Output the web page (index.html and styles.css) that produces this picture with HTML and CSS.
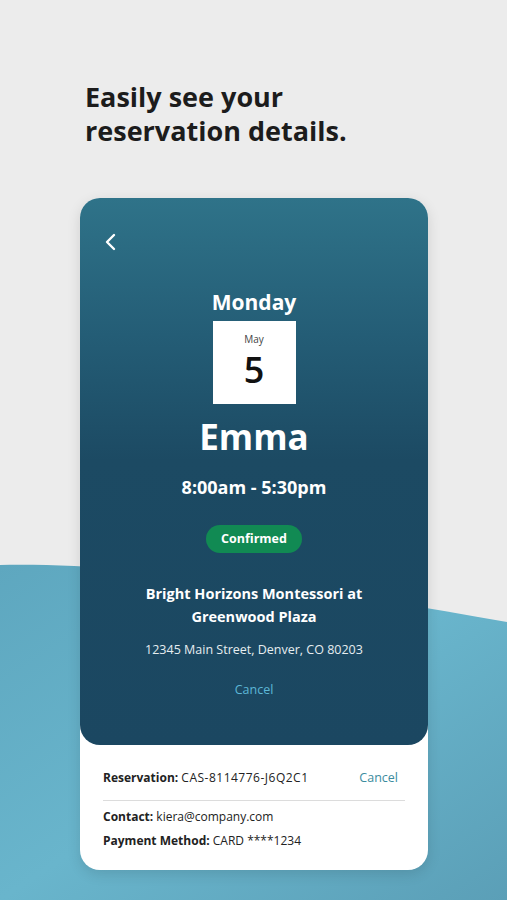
FILE: index.html
```html
<!DOCTYPE html>
<html lang="en">
<head>
    <meta charset="UTF-8" />
    <title>Reservation details</title>
    <link rel="stylesheet" href="styles.css">
</head>
<body>
<svg class="wave" width="507" height="900" viewBox="0 0 507 900">
    <defs>
        <linearGradient id="waveFill" x1="0" y1="0" x2="1" y2="1">
            <stop offset="0" stop-color="#5ea7bf" />
            <stop offset="0.5" stop-color="#69b5cc" />
            <stop offset="1" stop-color="#5b9fb7" />
        </linearGradient>
    </defs>
    <path d="M0 565 C 140 562, 340 592, 507 622 L507 900 L0 900 Z" fill="url(#waveFill)" />
</svg>

<h1 class="headline">Easily see your<br>reservation details.</h1>

<div class="card">
    <div class="card-top">
        <svg class="back" width="14" height="18" viewBox="0 0 14 18">
            <path d="M10 2 L3 9 L10 16" fill="none" stroke="#fff" stroke-width="2.4" stroke-linecap="round" stroke-linejoin="round" />
        </svg>
        <div class="day">Monday</div>
        <div class="calendar">
            <div class="month">May</div>
            <div class="date">5</div>
        </div>
        <div class="child">Emma</div>
        <div class="hours">8:00am - 5:30pm</div>
        <div class="status">Confirmed</div>
        <div class="center">Bright Horizons Montessori at<br>Greenwood Plaza</div>
        <div class="address">12345 Main Street, Denver, CO 80203</div>
        <div class="cancel-link">Cancel</div>
    </div>
    <div class="card-bottom">
        <div class="row">
            <span><b>Reservation:</b> <span class="code">CAS-8114776-J6Q2C1</span></span>
            <span class="cancel">Cancel</span>
        </div>
        <div class="divider"></div>
        <div class="info"><b>Contact:</b> kiera@company.com</div>
        <div class="info second"><b>Payment Method:</b> CARD ****1234</div>
    </div>
</div>
</body>
</html>
```

FILE: styles.css
```css
body {
    margin: 0;
    width: 507px;
    height: 900px;
    overflow: hidden;
    position: relative;
    background: #ececec;
    font-family: "Open Sans", Lato, sans-serif;
    color: #1e1e1e;
}
.wave {
    position: absolute;
    left: 0;
    top: 0;
}
.headline {
    position: relative;
    margin: 0;
    padding: 80px 0 0 85px;
    font-size: 27px;
    line-height: 34px;
    font-weight: 700;
    color: #1c1c1c;
}
.card {
    position: relative;
    margin: 50px 0 0 80px;
    width: 348px;
    border-radius: 20px;
    background: #fff;
    box-shadow: 0 4px 14px rgba(0, 0, 0, 0.12);
}
.card-top {
    display: flex;
    flex-direction: column;
    align-items: center;
    padding: 35px 0 46px;
    border-radius: 20px;
    background: linear-gradient(180deg, #2f7389 0%, #245d76 25%, #1c4a63 48%, #1b4761 100%);
    color: #fff;
    text-align: center;
}
.back {
    align-self: flex-start;
    margin-left: 24px;
}
.day {
    margin-top: 37px;
    font-size: 21px;
    line-height: 28px;
    font-weight: 700;
}
.calendar {
    margin-top: 5px;
    width: 83px;
    height: 83px;
    background: #fff;
    color: #111;
    box-sizing: border-box;
    padding-top: 11px;
}
.month {
    font-size: 10px;
    line-height: 14px;
    color: #444;
}
.date {
    margin-top: 7px;
    font-size: 36px;
    line-height: 34px;
    font-weight: 600;
}
.child {
    margin-top: 11px;
    font-size: 35px;
    line-height: 44px;
    font-weight: 700;
}
.hours {
    margin-top: 16px;
    font-size: 18px;
    line-height: 24px;
    font-weight: 700;
}
.status {
    margin-top: 26px;
    height: 28px;
    line-height: 28px;
    padding: 0 15px;
    border-radius: 14px;
    background: #118a53;
    font-size: 12.5px;
    font-weight: 700;
}
.center {
    margin-top: 29px;
    font-size: 14.5px;
    line-height: 23px;
    font-weight: 700;
}
.address {
    margin-top: 13px;
    font-size: 12.5px;
    line-height: 18px;
    color: #e6edf0;
}
.cancel-link {
    margin-top: 22px;
    font-size: 12.5px;
    line-height: 18px;
    color: #5db7d6;
}
.card-bottom {
    padding: 24px 23px 20px;
    font-size: 12px;
    line-height: 18px;
    color: #222;
}
.row {
    display: flex;
    justify-content: space-between;
    padding-right: 7px;
}
.code {
    letter-spacing: 0.5px;
}
.cancel {
    color: #3b8c9e;
    font-size: 12.5px;
}
.divider {
    margin: 13px 0 7px;
    height: 1px;
    background: #dcdcdc;
}
.info.second {
    margin-top: 6px;
}
```
